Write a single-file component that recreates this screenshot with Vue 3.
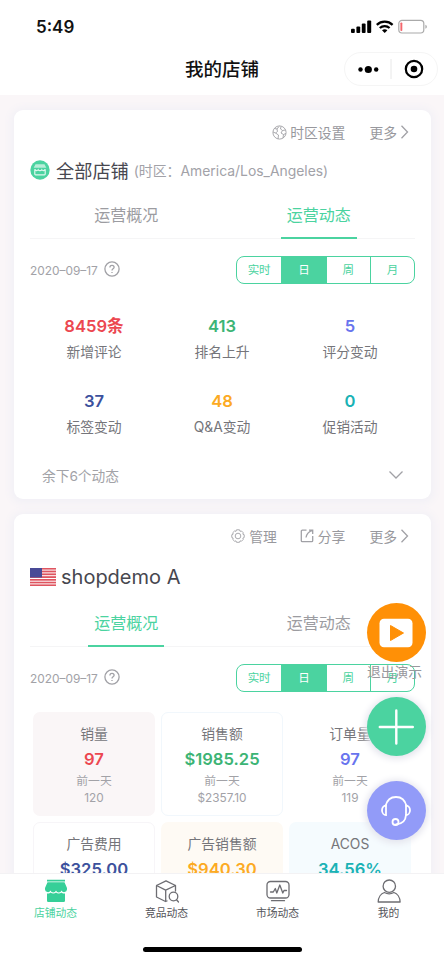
<script setup>
const periods = ['实时', '日', '周', '月']

const activity = [
  { value: '8459条', label: '新增评论', tone: 'red' },
  { value: '413', label: '排名上升', tone: 'green' },
  { value: '5', label: '评分变动', tone: 'violet' },
  { value: '37', label: '标签变动', tone: 'navy' },
  { value: '48', label: 'Q&A变动', tone: 'amber' },
  { value: '0', label: '促销活动', tone: 'teal' },
]

const metrics = [
  { label: '销量', value: '97', prev: '120', tone: 'red', box: 'box-rose' },
  { label: '销售额', value: '$1985.25', prev: '$2357.10', tone: 'green', box: 'box-sky' },
  { label: '订单量', value: '97', prev: '119', tone: 'violet', box: 'box-plain' },
  { label: '广告费用', value: '$325.00', tone: 'navy', box: 'box-line' },
  { label: '广告销售额', value: '$940.30', tone: 'amber', box: 'box-cream' },
  { label: 'ACOS', value: '34.56%', tone: 'teal', box: 'box-ice' },
]
</script>

<template>
  <div class="screen">
    <header class="top">
      <div class="status">
        <span class="time">5:49</span>
        <svg class="signals" width="78" height="16" viewBox="0 0 78 16">
          <rect x="0" y="9.800" width="3.800" height="4.200" rx="1" />
          <rect x="5.400" y="7.400" width="3.800" height="6.600" rx="1" />
          <rect x="10.800" y="4.600" width="3.800" height="9.400" rx="1" />
          <rect x="16.200" y="1.500" width="4" height="12.500" rx="1" />
          <g fill="none" stroke="#000" stroke-width="2.300">
            <path d="M25.800 5.800a11.600 11.600 0 0 1 15.800 0" />
            <path d="M28.800 9a7.200 7.200 0 0 1 9.800 0" />
          </g>
          <path d="M31 11.300a4.200 4.200 0 0 1 5.400 0l-2.700 2.800z" />
          <rect x="47.800" y="1.400" width="25" height="12.600" rx="3.200" fill="#fff" stroke="#aaa" stroke-width="1.200" />
          <rect x="49.400" y="3.400" width="1.900" height="8.600" rx=".8" fill="#f4676d" />
          <path d="M74.400 5.700v4c2-.8 2-3.200 0-4z" fill="#aaa" />
        </svg>
      </div>
      <div class="nav">
        <h1>我的店铺</h1>
        <div class="capsule">
          <svg width="92" height="34" viewBox="0 0 92 34">
            <circle cx="15.500" cy="17.500" r="2.200" /><circle cx="23.300" cy="17.500" r="3.600" /><circle cx="31.200" cy="17.500" r="2.200" />
            <path d="M46 7v20" stroke="#e8e8e8" />
            <circle cx="69" cy="17" r="8.200" fill="none" stroke="#000" stroke-width="2.200" />
            <circle cx="69" cy="17" r="3.300" />
          </svg>
        </div>
      </div>
    </header>

    <main class="content">
      <section class="card first">
        <div class="actions">
          <span class="action">
            <svg width="15" height="15" viewBox="0 0 15 15" class="line thin">
              <circle cx="7.500" cy="7.500" r="6.600" />
              <path d="M2.500 3.500l2.500.5 1.500-2 1-.8M5 4l.5 2.500L3.500 8l-2.500-1M3.500 8l3 2-.5 4M9 1.500L8.500 4l2 1.500L9 8l2.500 1.500-.5 3.500M13.500 5l-3 .5M14 8.500l-2.500 1" />
            </svg>时区设置</span>
          <span class="action more">更多<svg width="9" height="16" viewBox="0 0 9 16" class="line"><path d="M1.500 1.800l6 6.200-6 6.200" /></svg></span>
        </div>
        <div class="title">
          <svg width="20" height="20" viewBox="0 0 20 20">
            <circle cx="10" cy="10" r="9.700" fill="#4bd3a0" />
            <path d="M5.500 4.200h9l1.800 3.600H3.700z" fill="#b9eed9" />
            <path d="M4.800 9.300a1.900 1.900 0 0 0 3.400.4 2.100 2.100 0 0 0 3.600 0 1.900 1.900 0 0 0 3.400-.4V14a.8.8 0 0 1-.8.800H5.600a.8.8 0 0 1-.8-.8z" fill="none" stroke="#dff8ee" stroke-width="1.200" />
          </svg>
          <span class="name">全部店铺</span>
          <span class="zone">(时区：America/Los_Angeles)</span>
        </div>
        <div class="tabs"><span>运营概况</span><span class="on">运营动态</span></div>
        <div class="filter">
          <span class="date">2020–09–17</span>
          <svg width="16" height="16" viewBox="0 0 16 16" class="line"><circle cx="8" cy="8" r="7.100" /><path d="M5.900 6.400c0-2.800 4.200-2.700 4.200-.1 0 1.500-2.100 1.500-2.100 3.200M8 10.900v1.200" /></svg>
          <div class="segments"><span v-for="(p, i) in periods" :key="p" :class="{ picked: i === 1 }">{{ p }}</span></div>
        </div>
        <div class="stats">
          <div v-for="s in activity" :key="s.label" class="stat">
            <b :class="s.tone">{{ s.value }}</b>
            <span>{{ s.label }}</span>
          </div>
        </div>
        <div class="rest">
          <span>余下6个动态</span>
          <svg width="16" height="10" viewBox="0 0 16 10" class="line"><path d="M1.500 1.500L8 8l6.500-6.500" /></svg>
        </div>
      </section>

      <section class="card second">
        <div class="actions">
          <span class="action">
            <svg width="14" height="14" viewBox="0 0 14 14" class="line thin">
              <path d="M5.500.8h3l.5 1.500 1.500-.3 1.700 1.700-.3 1.500 1.300.5v2.800l-1.300.5.3 1.500-1.700 1.700-1.500-.3-.5 1.400h-3L5 11.900l-1.500.3-1.700-1.700.3-1.500L.8 8.500V5.700l1.300-.5-.3-1.500L3.500 2l1.500.3z" />
              <circle cx="7" cy="7" r="2.800" />
            </svg>管理</span>
          <span class="action share">
            <svg width="14" height="14" viewBox="0 0 14 14" class="line">
              <path d="M6.500 1.200H2.300a1 1 0 0 0-1 1v9.500a1 1 0 0 0 1 1h9.400a1 1 0 0 0 1-1V7M6 8.500C6.500 5 9 2.500 12.500 1.300M9 1.200h3.700v3.700" />
            </svg>分享</span>
          <span class="action more">更多<svg width="9" height="16" viewBox="0 0 9 16" class="line"><path d="M1.500 1.800l6 6.200-6 6.200" /></svg></span>
        </div>
        <div class="title">
          <svg width="26" height="18" viewBox="0 0 26 18">
            <rect width="26" height="18" fill="#df5560" />
            <path d="M0 2.100h26M0 4.900h26M0 7.700h26M0 10.500h26M0 13.200h26M0 15.900h26" stroke="#fff" stroke-width="1" />
            <rect width="12" height="9.500" fill="#494a96" />
          </svg>
          <span class="name latin">shopdemo A</span>
        </div>
        <div class="tabs"><span class="on">运营概况</span><span>运营动态</span></div>
        <div class="filter">
          <span class="date">2020–09–17</span>
          <svg width="16" height="16" viewBox="0 0 16 16" class="line"><circle cx="8" cy="8" r="7.100" /><path d="M5.900 6.400c0-2.800 4.200-2.700 4.200-.1 0 1.500-2.100 1.500-2.100 3.200M8 10.900v1.200" /></svg>
          <div class="segments"><span v-for="(p, i) in periods" :key="p" :class="{ picked: i === 1 }">{{ p }}</span></div>
        </div>
        <div class="metrics">
          <div v-for="m in metrics" :key="m.label" class="metric" :class="m.box">
            <span class="label">{{ m.label }}</span>
            <b :class="m.tone">{{ m.value }}</b>
            <template v-if="m.prev">
              <span class="prev">前一天</span>
              <span class="prev num">{{ m.prev }}</span>
            </template>
          </div>
        </div>
      </section>
    </main>

    <div class="floating">
      <div class="bubble orange">
        <svg width="34" height="30" viewBox="0 0 34 30"><rect x=".5" y=".8" width="33" height="28.400" rx="4.500" fill="#fff" /><path d="M11.500 7.500v15l13-7.500z" fill="#ff9006" stroke="#ff9006" stroke-linejoin="round" /></svg>
      </div>
      <span class="exit">退出演示</span>
      <div class="bubble mint">
        <svg width="36" height="36" viewBox="0 0 36 36"><path d="M18.300 1.500v33M1.800 18h33" stroke="#fff" stroke-width="2.400" stroke-linecap="round" /></svg>
      </div>
      <div class="bubble lilac">
        <svg width="32" height="32" viewBox="0 0 32 32" fill="none" stroke="#fff" stroke-width="1.800" stroke-linecap="round">
          <path d="M5.500 11C7 5 11 2 16 2s9 3 10.500 9" />
          <path d="M6 10.500c-2 0-4 1.800-4 4.700S4 20 6 20z" />
          <path d="M26 10.500c2 0 4 1.800 4 4.700S28 20 26 20z" />
          <path d="M26 20c-.3 5-3.500 9-10 9.500" /><circle cx="15.500" cy="27" r="3" />
        </svg>
      </div>
    </div>

    <footer class="bottom">
      <nav class="tabbar">
        <div class="item current">
          <svg width="24" height="24" viewBox="0 0 24 24">
            <path d="M3 .8h18v1.800H3zM3.500 3.300h17L23 9v1.500a2.900 2.900 0 0 1-5.500 1 2.900 2.900 0 0 1-5.500 0 2.900 2.900 0 0 1-5.500 0 2.900 2.900 0 0 1-5.500-1V9z" fill="#36cf98" />
            <path d="M3 14.500c1.500.3 2.800-.2 3.600-1.100 1.400 1.500 4 1.500 5.400 0 1.400 1.500 4 1.500 5.400 0 .8.900 2.100 1.400 3.600 1.100v7.200a1.300 1.300 0 0 1-1.300 1.300H4.300A1.300 1.300 0 0 1 3 21.700z" fill="#36cf98" />
          </svg>
          <span>店铺动态</span>
        </div>
        <div class="item">
          <svg width="24" height="24" viewBox="0 0 24 24" class="glyph">
            <path d="M12 22L10.500 22.500 1.500 18V6.500L11 1.800l9.500 4.700V12M1.500 6.500l9.200 4.600 9.800-4.600M10.700 11.100v11.200" />
            <circle cx="18.500" cy="17.500" r="4.300" /><path d="M21.500 20.700l2 2.300" />
          </svg>
          <span>竞品动态</span>
        </div>
        <div class="item">
          <svg width="24" height="24" viewBox="0 0 24 24" class="glyph">
            <rect x="1" y="2.500" width="22" height="16.500" rx="3.500" /><path d="M4.500 13h2.800l2-3.500 1.500 4.500 3-8 3 8 1.200-2.500h2.500M5.500 21.700h13" />
          </svg>
          <span>市场动态</span>
        </div>
        <div class="item">
          <svg width="24" height="24" viewBox="0 0 24 24" class="glyph">
            <circle cx="12.300" cy="7.200" r="6.200" /><path d="M1.200 23c.2-4.500 2.800-8.500 6.200-9.500 2.800 1.600 6.700 1.600 9.500 0 3.400 1 6 5 6.200 9.500z" />
          </svg>
          <span>我的</span>
        </div>
      </nav>
      <div class="homebar"></div>
    </footer>
  </div>
</template>

<style>
body { margin: 0; background: #fff; }
</style>

<style scoped>
* { box-sizing: border-box; }
.screen {
  position: relative;
  display: flex;
  flex-direction: column;
  width: 444px;
  height: 960px;
  overflow: hidden;
  background: #faf6f8;
  font-family: Inter, "Noto Sans CJK SC", sans-serif;
  color: #707076;
}
svg { display: block; flex: none; }
.top { height: 95px; flex: none; background: #fff; }
.status { display: flex; justify-content: space-between; align-items: center; height: 43px; padding: 11px 15px 0 36px; }
.time { font-size: 17px; font-weight: 600; color: #111; line-height: 32px; }
.nav { display: grid; grid-template-columns: 1fr auto 1fr; align-items: center; height: 52px; padding-right: 6px; padding-left: 6px; }
h1 { grid-column: 2; margin: 0; font-size: 18.500px; font-weight: 500; line-height: 28px; color: #111; }
.capsule { justify-self: end; width: 94px; height: 34px; border: 1px solid #f5f5f5; border-radius: 17px; overflow: hidden; display: flex; align-items: center; }

.content { flex: 1; min-height: 0; overflow: hidden; padding: 15px 13px 0 14px; display: flex; flex-direction: column; gap: 15px; }
.card { flex: none; padding: 0 16px; background: #fff; border-radius: 9px; box-shadow: 0 1px 9px 3px #f1f0f6; }
.first { height: 389px; }
.second { height: 430px; }
.actions { display: flex; justify-content: flex-end; height: 44px; padding-right: 6px; }
.action { display: flex; align-items: center; gap: 3px; font-size: 13.800px; color: #98989d; }
.more { margin-left: 24px; }
.share { margin-left: 23px; }
.second .action { gap: 4px; }
.second .more { gap: 3px; }
.line { fill: none; stroke: #a1a1a6; stroke-width: 1.300; }
.thin { stroke-width: .9; }
.title { display: flex; align-items: center; height: 32px; }
.name { margin-left: 6px; font-size: 18.200px; color: #47474f; }
.zone { margin-left: 5px; font-size: 13.900px; color: #a2a2a8; }
.name.latin { margin-left: 5px; font-size: 20px; letter-spacing: 0; }
.second .title { height: 37px; }
.tabs { display: flex; height: 53px; border-bottom: 1px solid #f5f5f6; }
.tabs span { position: relative; flex: 1; text-align: center; font-size: 16px; line-height: 58px; color: #9c9ca1; }
.tabs .on { color: #4bd3a0; }
.tabs .on::after { content: ""; position: absolute; left: 50%; bottom: -1px; width: 76px; height: 2px; margin-left: -38px; background: #4bd3a0; }
.second .tabs { height: 52px; }
.second .tabs span { line-height: 56px; }
.filter { display: flex; align-items: center; height: 28px; margin-top: 17px; }
.filter > svg { margin-top: -2px; }
.date { width: 73.500px; font-size: 11.900px; white-space: nowrap; color: #a2a2a7; }
.segments { display: grid; grid-template-columns: repeat(4, 1fr); width: 179px; height: 28px; margin-left: auto; border: 1px solid #4bd3a0; border-radius: 8px; overflow: hidden; }
.segments span { text-align: center; font-size: 11.500px; line-height: 26px; color: #4bd3a0; border-left: 1px solid #4bd3a0; }
.segments span:first-child { border-left: 0; }
.segments .picked { background: #4bd3a0; color: #fff; }
.stats { display: grid; grid-template-columns: repeat(3, 128px); grid-auto-rows: 75px; margin-top: 28px; }
.stat { display: flex; flex-direction: column; align-items: center; }
.stat b, .metric b { font-size: 16.600px; font-weight: 600; line-height: 28px; }
.stat span { font-size: 13.800px; line-height: 24px; color: #75757a; }
.rest { display: flex; justify-content: space-between; align-items: center; height: 26px; padding: 0 11px 0 12px; font-size: 13.700px; color: #a2a2a7; }
.red { color: #ec4750; }
.green { color: #3cb475; }
.violet { color: #6874ee; }
.navy { color: #3c519d; }
.amber { color: #fcaa23; }
.teal { color: #1ab2b5; }
.metrics { display: grid; grid-template-columns: repeat(3, 122px); gap: 6px; margin-top: 20px; margin-left: 3px; }
.metric { display: flex; flex-direction: column; align-items: center; height: 104px; padding-top: 9px; border-radius: 7px; border: 1px solid transparent; }
.label { font-size: 13.800px; line-height: 24px; color: #75757a; }
.metric b { line-height: 27px; }
.prev { font-size: 11.800px; line-height: 16px; color: #a2a2a7; }
.num { line-height: 18px; font-size: 11.800px; }
.box-rose { background: #faf6f7; }
.box-sky { border-color: #f1f7fc; }
.box-line { border-color: #f7f5f8; }
.box-cream { background: #fefaf4; }
.box-ice { background: #f5fbfe; }

.floating { position: absolute; left: 366px; top: 603px; display: flex; flex-direction: column; align-items: center; width: 60px; }
.bubble { display: flex; align-items: center; justify-content: center; width: 59px; height: 59px; border-radius: 50%; }
.orange { background: #ff9006; }
.mint { background: #4bd3a0; margin-top: 15px; box-shadow: 0 1px 7px 2px #e3e3ec; }
.lilac { background: #929bf8; margin-top: 25px; box-shadow: 0 1px 7px 2px #e3e3ec; }
.exit { height: 20px; padding-right: 3px; font-size: 13.800px; line-height: 20px; color: #98989d; white-space: nowrap; }

.bottom { position: relative; flex: none; height: 87px; background: #fff; border-top: 1px solid #f3f2f4; }
.tabbar { display: grid; grid-template-columns: repeat(4, 111px); height: 73px; }
.item { display: flex; flex-direction: column; align-items: center; padding-top: 5px; font-size: 10.800px; color: #55555a; }
.item span { margin-top: 1px; line-height: 20px; }
.item.current { color: #4bd3a0; }
.glyph { fill: none; stroke: #6d6d72; stroke-width: 1.300; stroke-linejoin: round; stroke-linecap: round; }
.homebar { width: 159px; height: 5px; margin: 0 auto; border-radius: 3px; background: #000; }
</style>
